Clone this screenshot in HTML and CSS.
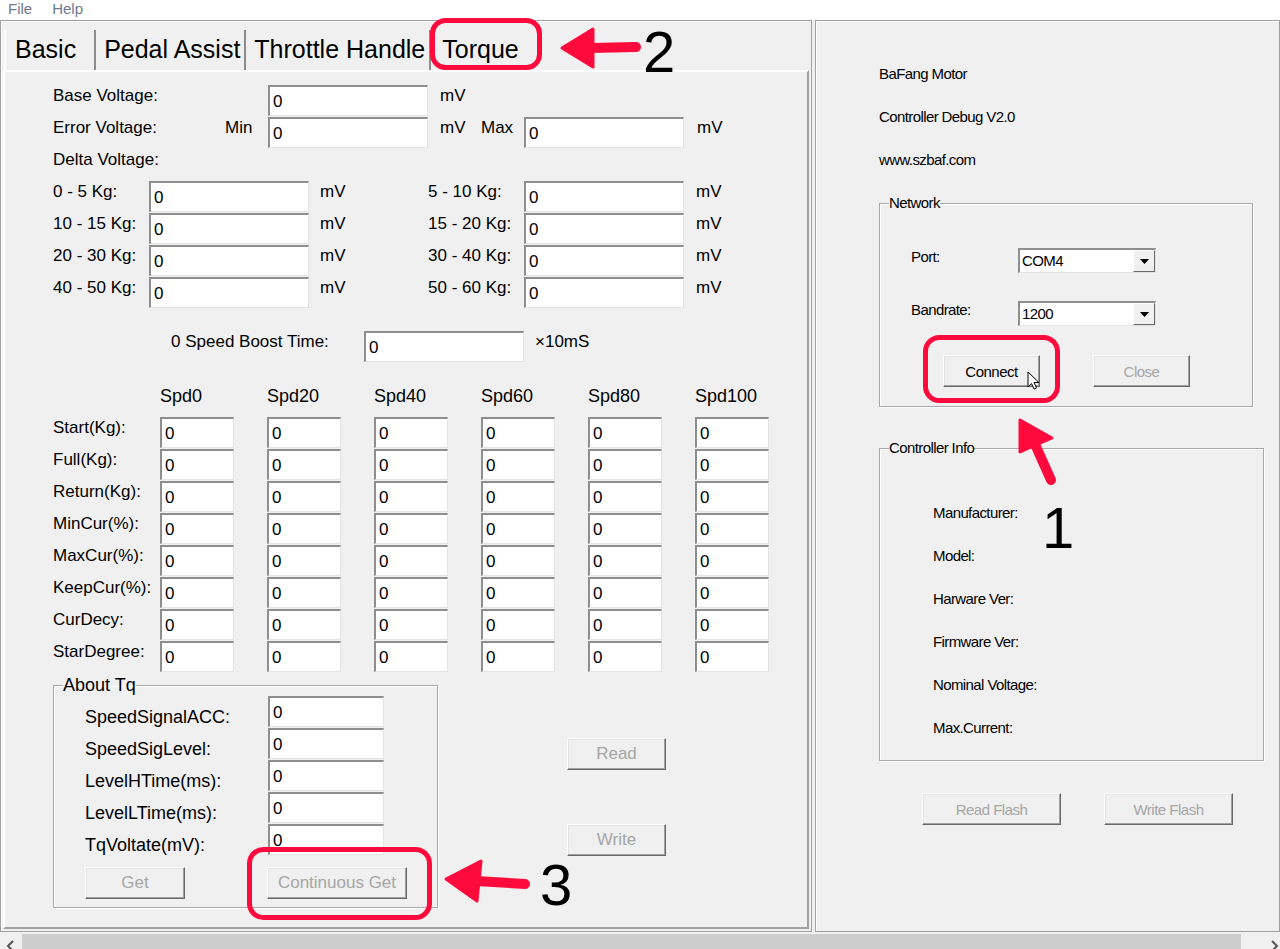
FILE: index.html
```html
<!DOCTYPE html>
<html lang="en">
<head>
    <meta charset="UTF-8">
    <meta name="viewport" content="width=device-width, initial-scale=1.0">
    <title>Controller Debug V2.0</title>
    <link rel="stylesheet" href="styles.css">
</head>
<body>
    <div class="menubar"><span>File</span><span>Help</span></div>

    <div class="window">
        <div class="frame">
            <div class="tabs">
                <div class="tab active">Basic</div>
                <div class="tab">Pedal Assist</div>
                <div class="tab">Throttle Handle</div>
                <div class="tab">Torque</div>
            </div>

            <div class="page">
                <div class="volt-grid">
                    <span class="lbl first">Base Voltage:</span>
                    <input class="field" style="grid-column: 3" value="0">
                    <span class="lbl unit">mV</span>

                    <span class="lbl first">Error Voltage:</span>
                    <span class="lbl">Min</span>
                    <input class="field" value="0">
                    <span class="lbl unit">mV</span>
                    <span class="lbl">Max</span>
                    <input class="field" value="0">
                    <span class="lbl unit2">mV</span>

                    <span class="lbl first wide">Delta Voltage:</span>
                </div>

                <div class="delta-grid">
                    <span class="lbl">0 - 5 Kg:</span><input class="field" value="0"><span class="lbl unit">mV</span>
                    <span class="lbl">5 - 10 Kg:</span><input class="field" value="0"><span class="lbl unit2">mV</span>
                    <span class="lbl">10 - 15 Kg:</span><input class="field" value="0"><span class="lbl unit">mV</span>
                    <span class="lbl">15 - 20 Kg:</span><input class="field" value="0"><span class="lbl unit2">mV</span>
                    <span class="lbl">20 - 30 Kg:</span><input class="field" value="0"><span class="lbl unit">mV</span>
                    <span class="lbl">30 - 40 Kg:</span><input class="field" value="0"><span class="lbl unit2">mV</span>
                    <span class="lbl">40 - 50 Kg:</span><input class="field" value="0"><span class="lbl unit">mV</span>
                    <span class="lbl">50 - 60 Kg:</span><input class="field" value="0"><span class="lbl unit2">mV</span>
                </div>

                <div class="boost">
                    <span class="lbl boost-lbl">0 Speed Boost Time:</span>
                    <input class="field" value="0">
                    <span class="lbl unit">&times;10mS</span>
                </div>

                <div class="spd-grid">
                    <span></span>
                    <span class="lbl hd">Spd0</span>
                    <span class="lbl hd">Spd20</span>
                    <span class="lbl hd">Spd40</span>
                    <span class="lbl hd">Spd60</span>
                    <span class="lbl hd">Spd80</span>
                    <span class="lbl hd">Spd100</span>

                    <span class="lbl">Start(Kg):</span>
                    <input class="field" value="0"><input class="field" value="0"><input class="field" value="0">
                    <input class="field" value="0"><input class="field" value="0"><input class="field" value="0">

                    <span class="lbl">Full(Kg):</span>
                    <input class="field" value="0"><input class="field" value="0"><input class="field" value="0">
                    <input class="field" value="0"><input class="field" value="0"><input class="field" value="0">

                    <span class="lbl">Return(Kg):</span>
                    <input class="field" value="0"><input class="field" value="0"><input class="field" value="0">
                    <input class="field" value="0"><input class="field" value="0"><input class="field" value="0">

                    <span class="lbl">MinCur(%):</span>
                    <input class="field" value="0"><input class="field" value="0"><input class="field" value="0">
                    <input class="field" value="0"><input class="field" value="0"><input class="field" value="0">

                    <span class="lbl">MaxCur(%):</span>
                    <input class="field" value="0"><input class="field" value="0"><input class="field" value="0">
                    <input class="field" value="0"><input class="field" value="0"><input class="field" value="0">

                    <span class="lbl">KeepCur(%):</span>
                    <input class="field" value="0"><input class="field" value="0"><input class="field" value="0">
                    <input class="field" value="0"><input class="field" value="0"><input class="field" value="0">

                    <span class="lbl">CurDecy:</span>
                    <input class="field" value="0"><input class="field" value="0"><input class="field" value="0">
                    <input class="field" value="0"><input class="field" value="0"><input class="field" value="0">

                    <span class="lbl">StarDegree:</span>
                    <input class="field" value="0"><input class="field" value="0"><input class="field" value="0">
                    <input class="field" value="0"><input class="field" value="0"><input class="field" value="0">
                </div>

                <div class="lower">
                    <fieldset class="group tq">
                        <legend>About Tq</legend>
                        <div class="tq-body">
                            <div class="tq-grid">
                                <span class="lbl">SpeedSignalACC:</span><input class="field" value="0">
                                <span class="lbl">SpeedSigLevel:</span><input class="field" value="0">
                                <span class="lbl">LevelHTime(ms):</span><input class="field" value="0">
                                <span class="lbl">LevelLTime(ms):</span><input class="field" value="0">
                                <span class="lbl">TqVoltate(mV):</span><input class="field" value="0">
                            </div>
                            <div class="tq-btns">
                                <button class="btn get" disabled>Get</button>
                                <button class="btn cont" disabled>Continuous Get</button>
                            </div>
                        </div>
                    </fieldset>

                    <div class="rw">
                        <button class="btn" disabled>Read</button>
                        <button class="btn" disabled>Write</button>
                    </div>
                </div>
            </div>
        </div>

        <div class="side">
            <p class="about">BaFang Motor</p>
            <p class="about">Controller Debug V2.0</p>
            <p class="about">www.szbaf.com</p>

            <fieldset class="group net">
                <legend>Network</legend>
                <div class="net-body">
                    <div class="combo-row">
                        <span class="combo-lbl">Port:</span>
                        <div class="combo">
                            <span>COM4</span>
                            <div class="drop"><svg width="9" height="5" viewBox="0 0 9 5"><path d="M0 0h9L4.5 5z" fill="#000"/></svg></div>
                        </div>
                    </div>
                    <div class="combo-row">
                        <span class="combo-lbl">Bandrate:</span>
                        <div class="combo">
                            <span>1200</span>
                            <div class="drop"><svg width="9" height="5" viewBox="0 0 9 5"><path d="M0 0h9L4.5 5z" fill="#000"/></svg></div>
                        </div>
                    </div>
                    <div class="net-btns">
                        <button class="btn">Connect</button>
                        <button class="btn" disabled>Close</button>
                    </div>
                </div>
            </fieldset>

            <fieldset class="group info">
                <legend>Controller Info</legend>
                <div class="info-body">
                    <p>Manufacturer:</p>
                    <p>Model:</p>
                    <p>Harware Ver:</p>
                    <p>Firmware Ver:</p>
                    <p>Nominal Voltage:</p>
                    <p>Max.Current:</p>
                </div>
            </fieldset>

            <div class="flash-btns">
                <button class="btn rf" disabled>Read Flash</button>
                <button class="btn wf" disabled>Write Flash</button>
            </div>
        </div>
    </div>

    <div class="hscroll">
        <div class="arrow"><svg width="10" height="12" viewBox="0 0 10 12"><path d="M8 1L3 6l5 5" fill="none" stroke="#555" stroke-width="2"/></svg></div>
        <div class="thumb"></div>
        <div class="arrow right"><svg width="10" height="12" viewBox="0 0 10 12"><path d="M2 1l5 5-5 5" fill="none" stroke="#555" stroke-width="2"/></svg></div>
    </div>

    <!-- red callouts drawn over the window -->
    <svg class="marks" width="1280" height="949" viewBox="0 0 1280 949">
        <g fill="none" stroke="#ff0a3c" stroke-width="5">
            <rect x="432.5" y="20.5" width="107" height="47" rx="13"/>
            <rect x="925.5" y="337.5" width="132" height="63" rx="14"/>
            <rect x="249.5" y="849.5" width="180" height="68" rx="14"/>
        </g>
        <g fill="#ff0a3c" stroke="#ff0a3c" stroke-linejoin="round">
            <path d="M562 48L593 29L593 67Z" stroke-width="3"/>
            <path d="M590 48L636 47" stroke-width="10" stroke-linecap="round"/>
            <path d="M446 879L481 861L477 901Z" stroke-width="3"/>
            <path d="M476 881L525 884" stroke-width="10" stroke-linecap="round"/>
            <path d="M1020 420L1052 438L1020 452Z" stroke-width="3"/>
            <path d="M1034 442L1051 480" stroke-width="10" stroke-linecap="round"/>
        </g>
        <g font-family="Liberation Sans, Arial, sans-serif" font-size="58" fill="#000">
            <text x="643" y="72">2</text>
            <text x="1042" y="548">1</text>
            <text x="540" y="905">3</text>
        </g>
        <path d="M1028 372V387L1031.5 383.5L1034 389L1036.5 388L1034 382.5H1039Z" fill="#fff" stroke="#000" stroke-width="1"/>
    </svg>
</body>
</html>
```

FILE: styles.css
```css
body {
    margin: 0;
    height: 949px;
    overflow: hidden;
    position: relative;
    background: #f0f0f0;
    font-family: "Liberation Sans", Arial, sans-serif;
    color: #000;
}
.menubar {
    height: 20px;
    background: #fff;
    display: flex;
    gap: 20px;
    padding-left: 8px;
    font-size: 15px;
    line-height: 17px;
    color: #6e7a90;
}
.window {
    display: flex;
    gap: 3px;
    height: 912px;
}

/* left tab control */
.frame {
    width: 812px;
    box-sizing: border-box;
    border: 1px solid #a0a0a0;
    box-shadow: inset 1px 1px #fff;
    padding: 0 2px 2px 2px;
    display: flex;
    flex-direction: column;
}
.tabs {
    display: flex;
    height: 40px;
    margin: 9px 0 0 1px;
    font-size: 25px;
    line-height: 38px;
}
.tab {
    padding: 0 4px 0 8px;
    border-right: 2px solid #8c8c8c;
    white-space: nowrap;
}
.tab.active {
    border-left: 2px solid #fff;
    padding: 0 18px 0 9px;
}
.tab:last-child {
    border-right: none;
    padding-left: 11px;
}
.page {
    flex: 1;
    border: 2px solid;
    border-color: #fff #a0a0a0 #a0a0a0 #fff;
    padding: 13px 0 0 48px;
    font-size: 17px;
}
.lbl {
    line-height: 22px;
    white-space: nowrap;
}
.field {
    box-sizing: border-box;
    width: 160px;
    height: 31px;
    margin: 0;
    padding: 2px 0 0 3px;
    border-style: solid;
    border-width: 2px 1px 1px 2px;
    border-color: #8e8e8e #e3e3e3 #e3e3e3 #8e8e8e;
    background: #fff;
    font: 17px "Liberation Sans", Arial, sans-serif;
    color: #000;
    outline: none;
}

.volt-grid {
    display: grid;
    grid-template-columns: 172px 43px 160px 53px 43px 160px auto;
    grid-auto-rows: 32px;
    align-items: start;
}
.volt-grid .first {
    grid-column: 1;
}
.volt-grid .wide {
    grid-column: 1 / span 3;
}
.unit {
    padding-left: 12px;
}
.unit2 {
    padding-left: 13px;
}

.delta-grid {
    display: grid;
    grid-template-columns: 96px 160px 119px 96px 160px auto;
    grid-auto-rows: 32px;
    align-items: start;
}
.delta-grid .unit {
    padding-left: 11px;
}
.delta-grid .unit2 {
    padding-left: 12px;
}

.boost {
    display: flex;
    align-items: flex-start;
    height: 32px;
    margin-top: 22px;
    padding-left: 118px;
}
.boost-lbl {
    width: 193px;
}
.boost .unit {
    padding-left: 11px;
}

.spd-grid {
    display: grid;
    grid-template-columns: repeat(7, 107px);
    grid-auto-rows: 32px;
    align-items: start;
    margin-top: 22px;
}
.spd-grid .field {
    width: 74px;
}
.hd {
    font-size: 18px;
}

/* group boxes */
.group {
    margin: 0;
    padding: 0;
    min-width: 0;
    border: 1px solid #a8a8a8;
    box-shadow: inset 1px 1px #fff, 1px 1px #fff;
}
.group legend {
    padding: 0;
    margin-left: 9px;
    line-height: 22px;
}

.lower {
    display: flex;
    margin-top: 1px;
}
.tq {
    width: 385px;
    box-sizing: border-box;
    font-size: 18px;
}
.tq-body {
    padding: 0 0 8px 31px;
}
.tq-grid {
    display: grid;
    grid-template-columns: 183px 116px;
    grid-auto-rows: 32px;
    align-items: start;
}
.tq-grid .lbl {
    padding-top: 10px;
}
.tq-grid .field {
    width: 116px;
}
.tq-btns {
    display: flex;
    margin-top: 11px;
}

.btn {
    box-sizing: border-box;
    height: 32px;
    margin: 0;
    padding: 0;
    border: 1px solid;
    border-color: #fff #696969 #696969 #fff;
    box-shadow: inset -1px -1px #a0a0a0, inset 1px 1px #e3e3e3;
    background: #f0f0f0;
    font: 17px "Liberation Sans", Arial, sans-serif;
    color: #000;
}
.btn:disabled {
    color: #a6a6a6;
}
.get {
    width: 100px;
}
.cont {
    width: 140px;
    margin-left: 82px;
}
.rw {
    display: flex;
    flex-direction: column;
    gap: 54px;
    margin-left: 129px;
    padding-top: 64px;
}
.rw .btn {
    width: 99px;
}

/* right info panel */
.side {
    flex: 1;
    box-sizing: border-box;
    border: 1px solid #a0a0a0;
    box-shadow: inset 1px 1px #fff;
    padding: 42px 0 0 63px;
    font-size: 15px;
    letter-spacing: -0.6px;
}
.side .btn {
    font-size: 15px;
    letter-spacing: -0.5px;
}
.about {
    margin: 0 0 21px;
    line-height: 22px;
}
.net {
    width: 374px;
    box-sizing: border-box;
}
.net-body {
    padding: 0 0 19px 31px;
}
.combo-row {
    display: flex;
    margin-top: 34px;
}
.combo-row + .combo-row {
    margin-top: 28px;
}
.combo-lbl {
    width: 107px;
    line-height: 18px;
}
.combo {
    display: flex;
    width: 138px;
    height: 25px;
    box-sizing: border-box;
    border-style: solid;
    border-width: 2px 1px 1px 2px;
    border-color: #8e8e8e #e3e3e3 #e3e3e3 #8e8e8e;
    background: #fff;
}
.combo span {
    flex: 1;
    padding-left: 2px;
    line-height: 22px;
}
.drop {
    width: 22px;
    box-sizing: border-box;
    display: flex;
    align-items: center;
    justify-content: center;
    background: #f0f0f0;
    border: 1px solid;
    border-color: #fff #696969 #696969 #fff;
}
.net-btns {
    display: flex;
    gap: 53px;
    margin: 29px 0 0 32px;
}
.net-btns .btn {
    width: 97px;
}
.info {
    width: 385px;
    box-sizing: border-box;
    margin-top: 30px;
}
.info-body {
    padding-left: 53px;
}
.info-body p {
    margin: 0 0 21px;
    line-height: 22px;
}
.info-body p:first-child {
    margin-top: 43px;
}
.flash-btns {
    display: flex;
    gap: 43px;
    margin: 32px 0 0 43px;
}
.rf {
    width: 139px;
}
.wf {
    width: 129px;
}

/* bottom scroll bar */
.hscroll {
    display: flex;
    height: 17px;
}
.arrow {
    width: 22px;
    padding: 6px 0 0 5px;
    box-sizing: border-box;
}
.arrow.right {
    width: 39px;
    padding-left: 29px;
}
.thumb {
    flex: 1;
    margin-top: 2px;
    background: #cdcdcd;
}

.marks {
    position: absolute;
    left: 0;
    top: 0;
    pointer-events: none;
}
```
